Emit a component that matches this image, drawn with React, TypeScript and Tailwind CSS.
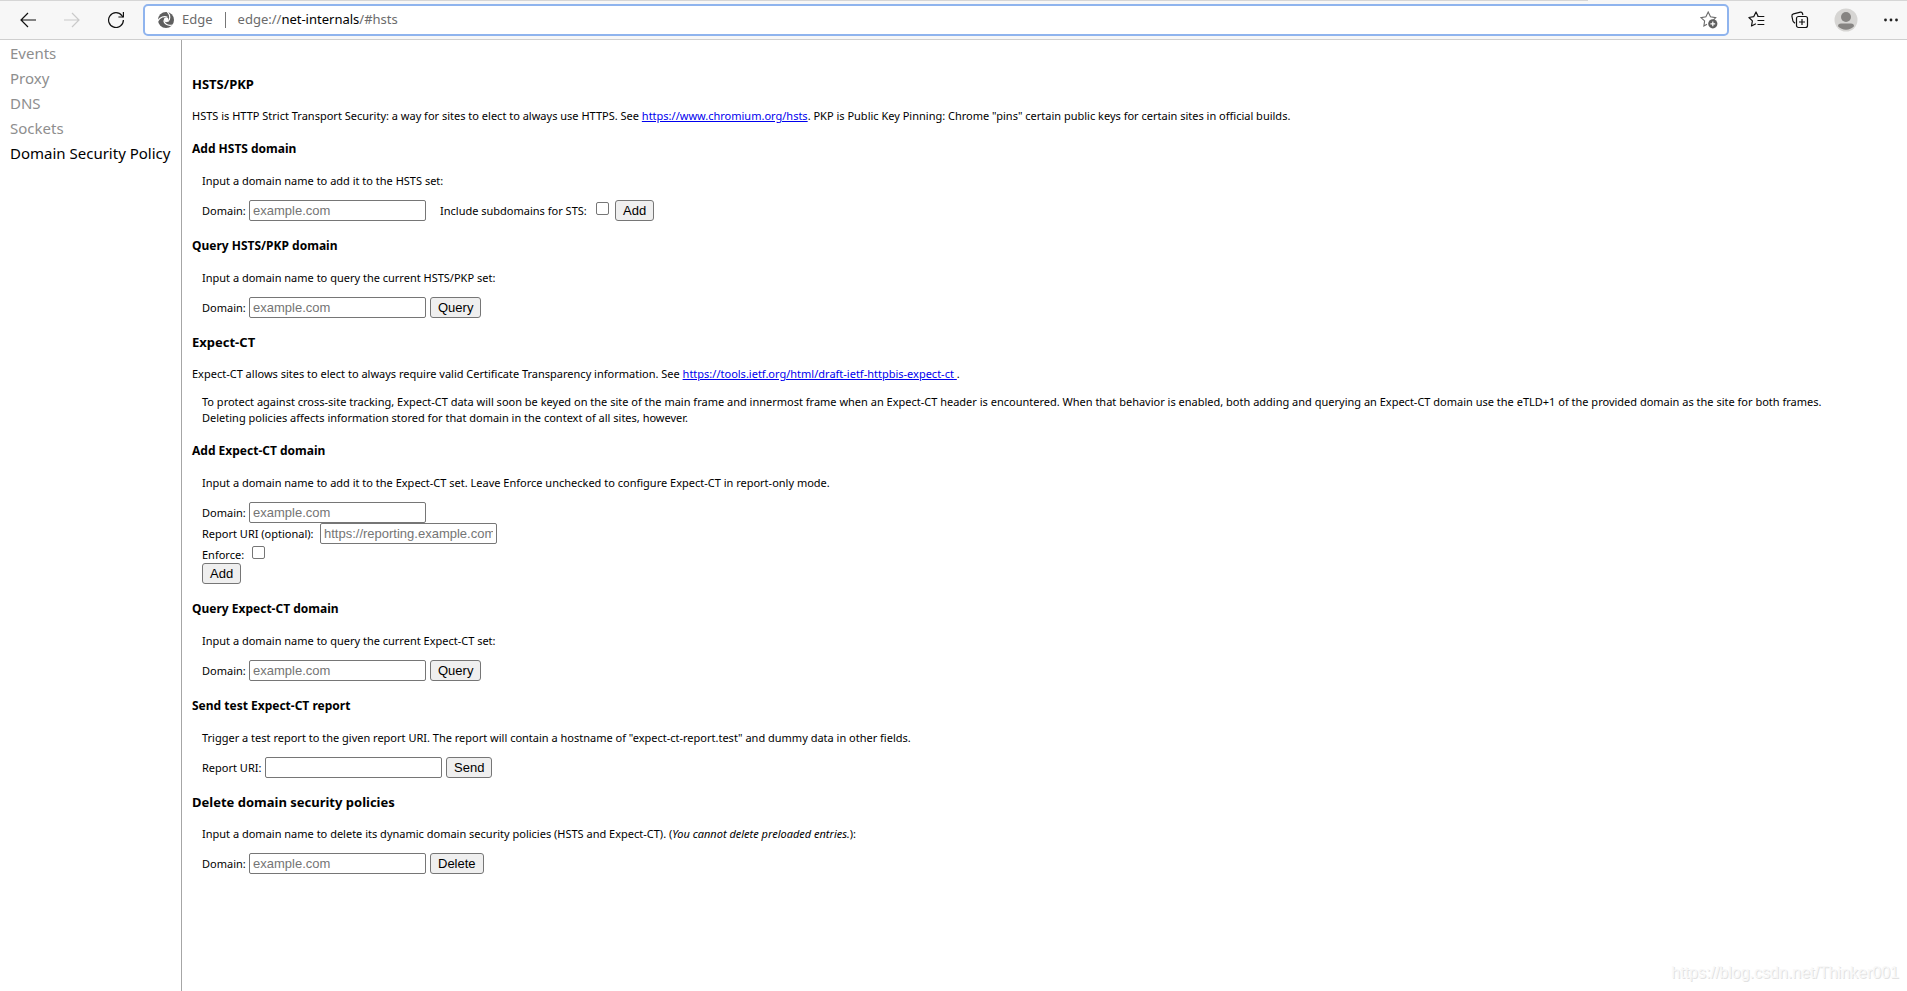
import type { ReactNode } from "react";

const NAV_ITEMS = ["Events", "Proxy", "DNS", "Sockets", "Domain Security Policy"];

function BackArrow() {
  return (
    <svg width="16" height="16" viewBox="0 0 16 16" fill="none" stroke="currentColor" strokeWidth="1.2">
      <path d="M16 8H1M8 1 1 8l7 7" />
    </svg>
  );
}

function ForwardArrow() {
  return (
    <svg width="16" height="16" viewBox="0 0 16 16" fill="none" stroke="currentColor" strokeWidth="1.2">
      <path d="M0 8h15M8 1l7 7-7 7" />
    </svg>
  );
}

function ReloadIcon() {
  return (
    <svg width="16" height="16" viewBox="0 0 16 16" fill="none" stroke="currentColor" strokeWidth="1.2">
      <path d="M15.4 8A7.4 7.4 0 1 1 13.9 3.6L15.2 5" />
      <path d="M15.4 0v5h-5" />
    </svg>
  );
}

function EdgeIcon() {
  return (
    <svg width="16" height="16" viewBox="0 0 16 16">
      <circle cx="8" cy="8" r="8" fill="#5f5f5f" />
      <circle cx="8.2" cy="7.8" r="2.4" fill="#fff" />
      <g fill="none" stroke="#fff" strokeWidth="1.2">
        <path d="M9.4 5.2C6.400 3.800 2 4.600 -.3 9.200" />
        <path d="M5.800 8.400C6 11.600 9.200 14.200 14.600 13" />
        <path d="M9.600 9.800C12.400 8 12.600 3.200 9.400 -.2" />
      </g>
    </svg>
  );
}

function AddFavoriteIcon() {
  return (
    <svg width="18" height="18" viewBox="0 0 18 18">
      <path
        d="M7 13.300 3.900 15l.7-5.100L1 6.600l4.900-.9L8.200 1l2.300 4.700 5.200.9-2.200 2.200"
        fill="none"
        stroke="#6b6b6b"
        strokeWidth="1.1"
      />
      <circle cx="12.800" cy="12.800" r="4.600" fill="#5f5f5f" />
      <path d="M12.800 10.400v4.800M10.400 12.800h4.800" stroke="#fff" strokeWidth="1.2" />
    </svg>
  );
}

function FavoritesIcon() {
  return (
    <svg width="18" height="18" viewBox="0 0 18 18" fill="none" stroke="#111" strokeWidth="1.2">
      <path d="M10.200 5.500 8 1 5.700 5.700.9 6.500l3.500 3.400L3.500 15l4.400-2.300" strokeLinejoin="round" />
      <path d="M9.500 5.500h6.800M9.500 9.500h6.800M9.500 13.500h6.800" />
    </svg>
  );
}

function CollectionsIcon() {
  return (
    <svg width="18" height="18" viewBox="0 0 18 18" fill="none" stroke="#111" strokeWidth="1.2">
      <path d="M4 12.200 2.900 11.300Q2 10.600 1.800 9.500L.9 5.200Q.7 3.300 2.500 2.800L9.500 1.200Q11.100.9 11.500 2.500L11.900 4" />
      <rect x="5.500" y="5.500" width="11" height="11" rx="2" />
      <path d="M11 8v6M8 11h6" />
    </svg>
  );
}

function AvatarIcon() {
  return (
    <svg width="24" height="24" viewBox="0 0 24 24">
      <circle cx="12" cy="12" r="11.500" fill="#d6d5d3" />
      <circle cx="12" cy="9" r="5" fill="#868482" />
      <path d="M4 18.200Q4 15.500 7 15.500h10q3 0 3 2.700A11 11 0 0 1 4 18.200" fill="#868482" />
    </svg>
  );
}

function MoreIcon() {
  return (
    <svg width="16" height="16" viewBox="0 0 16 16" fill="#222">
      <circle cx="2.500" cy="8" r="1.400" />
      <circle cx="8" cy="8" r="1.400" />
      <circle cx="13.500" cy="8" r="1.400" />
    </svg>
  );
}

function TabStripEdge() {
  return (
    <div className="flex h-px bg-[#d6d6d6]">
      <span className="grow" />
      <span className="mr-[197px] w-[122px] bg-[#f7f7f7]" />
    </div>
  );
}

function Toolbar() {
  return (
    <header className="flex h-[39px] items-center border-b border-[#cfcfcf] bg-[#f7f7f7] pr-2 pl-5">
      <div className="flex shrink-0 gap-7">
        <button aria-label="Back" className="text-[#111]">
          <BackArrow />
        </button>
        <button aria-label="Forward" disabled className="text-[#cacaca]">
          <ForwardArrow />
        </button>
        <button aria-label="Reload" className="text-[#111]">
          <ReloadIcon />
        </button>
      </div>
      <div className="ml-[19px] flex h-8 grow items-center rounded-[5px] border-2 border-[#8fb4ee] bg-white pr-[9px] pl-[13px] text-[13px] text-[#6b6b6b]">
        <EdgeIcon />
        <span className="ml-2">Edge</span>
        <span className="mr-3 ml-3 h-4 w-px bg-[#767676]" />
        <span className="grow">
          edge://<span className="text-black">net-internals</span>/#hsts
        </span>
        <button aria-label="Add this page to favorites">
          <AddFavoriteIcon />
        </button>
      </div>
      <div className="ml-[19px] flex shrink-0 items-center gap-[25px]">
        <button aria-label="Favorites">
          <FavoritesIcon />
        </button>
        <button aria-label="Collections">
          <CollectionsIcon />
        </button>
        <button aria-label="Profile">
          <AvatarIcon />
        </button>
        <button aria-label="Settings and more">
          <MoreIcon />
        </button>
      </div>
    </header>
  );
}

function SectionTitle({ children }: { children: ReactNode }) {
  return <h3 className="my-[15px] text-[13px] leading-[18px] font-bold">{children}</h3>;
}

function FormTitle({ children }: { children: ReactNode }) {
  return <h4 className="mt-[17px] mb-4 text-[12px] leading-4 font-bold">{children}</h4>;
}

function Description({ children }: { children: ReactNode }) {
  return <p className="mb-[11px]">{children}</p>;
}

function TextField({ id, placeholder }: { id: string; placeholder?: string }) {
  return (
    <input
      id={id}
      type="text"
      placeholder={placeholder}
      className="h-[21px] w-[177px] rounded-[2px] border border-[#767676] bg-white px-[3px] font-['Liberation_Sans',Arial,sans-serif] text-[13px] placeholder:text-[#757575]"
    />
  );
}

function Checkbox({ id }: { id: string }) {
  return (
    <input
      id={id}
      type="checkbox"
      className="mb-1 size-[13px] appearance-none rounded-[2px] border border-[#767676] bg-white checked:bg-[#0075ff]"
    />
  );
}

function PushButton({ children }: { children: ReactNode }) {
  return (
    <button
      type="button"
      className="h-[21px] rounded-[3px] border border-[#767676] bg-[#efefef] px-[7px] font-['Liberation_Sans',Arial,sans-serif] text-[13px] leading-[19px]"
    >
      {children}
    </button>
  );
}

function DomainLabel({ htmlFor }: { htmlFor: string }) {
  return (
    <label htmlFor={htmlFor} className="w-[47px]">
      Domain:
    </label>
  );
}

function SingleFieldForm({ id, action }: { id: string; action: string }) {
  return (
    <form className="flex items-center">
      <DomainLabel htmlFor={id} />
      <TextField id={id} placeholder="example.com" />
      <span className="w-1" />
      <PushButton>{action}</PushButton>
    </form>
  );
}

function Block({ children }: { children: ReactNode }) {
  return <div className="ml-[10px]">{children}</div>;
}

export default function App() {
  return (
    <div className="relative flex min-h-screen flex-col bg-white font-['Noto_Sans','Open_Sans',sans-serif] text-black">
      <TabStripEdge />
      <Toolbar />
      <div className="flex grow">
        <nav className="w-[182px] shrink-0 border-r border-[#a6a6a6] pt-px pl-[10px] text-[15px] leading-[25px] whitespace-nowrap">
          {NAV_ITEMS.map((item, index) => (
            <a
              key={item}
              href="#hsts"
              className={index === NAV_ITEMS.length - 1 ? "block text-black" : "block text-[#8e8e8e]"}
            >
              {item}
            </a>
          ))}
        </nav>
        <main className="min-w-0 grow px-[10px] pt-5 text-[11px] leading-4">
          <SectionTitle>HSTS/PKP</SectionTitle>
          <p>
            HSTS is HTTP Strict Transport Security: a way for sites to elect to always use HTTPS. See{" "}
            <a href="https://www.chromium.org/hsts" className="text-[#0000ee] underline">
              https://www.chromium.org/hsts
            </a>
            . PKP is Public Key Pinning: Chrome "pins" certain public keys for certain sites in official builds.
          </p>

          <FormTitle>Add HSTS domain</FormTitle>
          <Block>
            <Description>Input a domain name to add it to the HSTS set:</Description>
            <form className="flex items-center">
              <DomainLabel htmlFor="add-hsts" />
              <TextField id="add-hsts" placeholder="example.com" />
              <label htmlFor="add-hsts-subdomains" className="ml-[14px] w-[156px]">
                Include subdomains for STS:
              </label>
              <Checkbox id="add-hsts-subdomains" />
              <span className="w-[6px]" />
              <PushButton>Add</PushButton>
            </form>
          </Block>

          <FormTitle>Query HSTS/PKP domain</FormTitle>
          <Block>
            <Description>Input a domain name to query the current HSTS/PKP set:</Description>
            <SingleFieldForm id="query-hsts" action="Query" />
          </Block>

          <SectionTitle>Expect-CT</SectionTitle>
          <p>
            Expect-CT allows sites to elect to always require valid Certificate Transparency information. See{" "}
            <a href="https://tools.ietf.org/html/draft-ietf-httpbis-expect-ct" className="text-[#0000ee] underline">
              https://tools.ietf.org/html/draft-ietf-httpbis-expect-ct{" "}
            </a>
            .
          </p>
          <p className="mt-3 ml-[10px]">
            To protect against cross-site tracking, Expect-CT data will soon be keyed on the site of the main frame and
            innermost frame when an Expect-CT header is encountered. When that behavior is enabled, both adding and
            querying an Expect-CT domain use the eTLD+1 of the provided domain as the site for both frames.
            <br />
            Deleting policies affects information stored for that domain in the context of all sites, however.
          </p>

          <FormTitle>Add Expect-CT domain</FormTitle>
          <Block>
            <Description>
              Input a domain name to add it to the Expect-CT set. Leave Enforce unchecked to configure Expect-CT in
              report-only mode.
            </Description>
            <form>
              <div className="flex items-center">
                <DomainLabel htmlFor="add-ct" />
                <TextField id="add-ct" placeholder="example.com" />
              </div>
              <div className="flex items-center">
                <label htmlFor="add-ct-report" className="w-[118px]">
                  Report URI (optional):
                </label>
                <TextField id="add-ct-report" placeholder="https://reporting.example.com" />
              </div>
              <div className="flex h-[19px] items-end">
                <label htmlFor="add-ct-enforce" className="w-[50px]">
                  Enforce:
                </label>
                <Checkbox id="add-ct-enforce" />
              </div>
              <div className="flex">
                <PushButton>Add</PushButton>
              </div>
            </form>
          </Block>

          <FormTitle>Query Expect-CT domain</FormTitle>
          <Block>
            <Description>Input a domain name to query the current Expect-CT set:</Description>
            <SingleFieldForm id="query-ct" action="Query" />
          </Block>

          <FormTitle>Send test Expect-CT report</FormTitle>
          <Block>
            <Description>
              Trigger a test report to the given report URI. The report will contain a hostname of
              "expect-ct-report.test" and dummy data in other fields.
            </Description>
            <form className="flex items-center">
              <label htmlFor="send-report" className="w-[63px]">
                Report URI:
              </label>
              <TextField id="send-report" />
              <span className="w-1" />
              <PushButton>Send</PushButton>
            </form>
          </Block>

          <SectionTitle>Delete domain security policies</SectionTitle>
          <Block>
            <Description>
              Input a domain name to delete its dynamic domain security policies (HSTS and Expect-CT). (
              <i>You cannot delete preloaded entries.</i>):
            </Description>
            <SingleFieldForm id="delete-policy" action="Delete" />
          </Block>
        </main>
      </div>
      <div className="pointer-events-none absolute right-2 bottom-2 font-['Liberation_Sans',Arial,sans-serif] text-[16px] leading-5 text-[#f8f8f8] [text-shadow:1px_1px_0_#e2e2e2]">
        https://blog.csdn.net/Thinker001
      </div>
    </div>
  );
}
